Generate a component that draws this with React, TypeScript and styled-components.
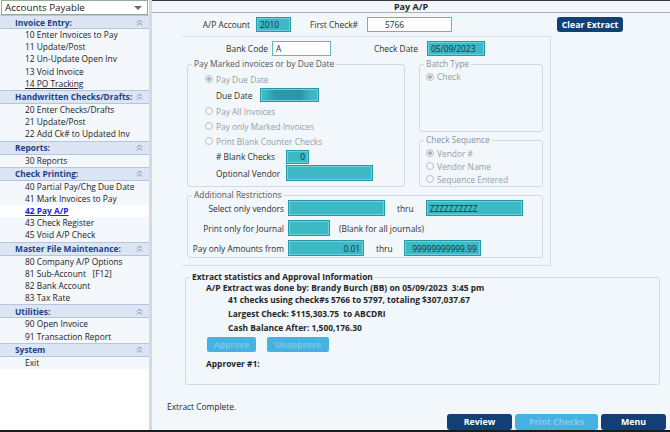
import React from "react";
import styled, { createGlobalStyle } from "styled-components";

const colors = {
  navy: "#123f75",
  teal: "#3db8c5",
  tealEdge: "#2399a8",
  sky: "#45b2e1",
  page: "#f2f7fc",
  line: "#d3d9e0",
  text: "#262626",
  muted: "#979ea7",
  header: "#1d3f8a",
};

const GlobalStyle = createGlobalStyle`
  * { box-sizing: border-box; }
  body {
    margin: 0;
    font-family: "Open Sans", "Noto Sans", sans-serif;
    font-size: 8.4px;
    color: ${colors.text};
  }
`;

const Window = styled.div`
  display: flex;
  width: 670px;
  height: 432px;
  border-bottom: 2px solid #1c1c1c;
  overflow: hidden;
`;

/* ---------- sidebar ---------- */

const Sidebar = styled.div`
  flex: none;
  width: 152px;
  background: #fff;
  border-right: 3px solid #d6dade;
  display: flex;
  flex-direction: column;
`;

const ModuleSelect = styled.div`
  height: 15px;
  margin: 0 1px;
  padding: 0 5px 0 3px;
  border: 1px solid #93aa9c;
  display: flex;
  align-items: center;
  justify-content: space-between;
  font-size: 9.8px;
  color: #222;
`;

const Caret = styled.span`
  width: 0;
  height: 0;
  border-left: 4px solid transparent;
  border-right: 4px solid transparent;
  border-top: 4px solid #6b6b6b;
`;

const Section = styled.div`
  background: #f4f7fb;
`;

const SectionHeader = styled.div`
  height: 14px;
  padding: 0 6px 0 15px;
  display: flex;
  align-items: center;
  justify-content: space-between;
  background: #dbe5f3;
  border-top: 1px solid #b4c5dc;
  border-bottom: 1px solid #b4c5dc;
  font-weight: 700;
  color: ${colors.header};
`;

const MenuItem = styled.div<{ $active?: boolean; $hover?: boolean }>`
  height: 12.2px;
  line-height: 12.2px;
  padding-left: 25px;
  white-space: pre;
  background: ${(p) => (p.$active ? "#fff" : "transparent")};
  color: ${(p) => (p.$active ? "#2424d4" : "#222")};
  font-weight: ${(p) => (p.$active ? 700 : 400)};
  text-decoration: ${(p) => (p.$active || p.$hover ? "underline" : "none")};
`;

const Chevrons = () => (
  <svg width="7" height="7" viewBox="0 0 7 7" fill="none" stroke="#7b8ca3" strokeWidth="1">
    <polyline points="1,3.5 3.5,1 6,3.5" />
    <polyline points="1,6.5 3.5,4 6,6.5" />
  </svg>
);

const menu = [
  {
    title: "Invoice Entry:",
    items: ["10 Enter Invoices to Pay", "11 Update/Post", "12 Un-Update Open Inv", "13 Void Invoice", "14 PO Tracking"],
  },
  { title: "Handwritten Checks/Drafts:", items: ["20 Enter Checks/Drafts", "21 Update/Post", "22 Add Ck# to Updated Inv"] },
  { title: "Reports:", items: ["30 Reports"] },
  {
    title: "Check Printing:",
    items: ["40 Partial Pay/Chg Due Date", "41 Mark Invoices to Pay", "42 Pay A/P", "43 Check Register", "45 Void A/P Check"],
  },
  {
    title: "Master File Maintenance:",
    items: ["80 Company A/P Options", "81 Sub-Account   [F12]", "82 Bank Account", "83 Tax Rate"],
  },
  { title: "Utilities:", items: ["90 Open Invoice", "91 Transaction Report"] },
  { title: "System", items: ["Exit"] },
];

/* ---------- main ---------- */

const Main = styled.div`
  flex: 1;
  background: ${colors.page};
  border-top: 1px solid #3a3a3a;
  display: flex;
  flex-direction: column;
`;

const TitleBar = styled.div`
  height: 12px;
  line-height: 11px;
  border-bottom: 1px solid #a9b0b8;
  text-align: center;
  font-weight: 700;
  font-size: 9px;
`;

const Row = styled.div<{ $h?: number; $mt?: number; $pl?: number }>`
  display: flex;
  align-items: center;
  flex: none;
  height: ${(p) => p.$h ?? 15}px;
  margin-top: ${(p) => p.$mt ?? 0}px;
  padding-left: ${(p) => p.$pl ?? 0}px;
`;

const Label = styled.span<{ $w?: number; $ml?: number; $right?: boolean; $muted?: boolean }>`
  flex: none;
  width: ${(p) => (p.$w ? `${p.$w}px` : "auto")};
  margin-left: ${(p) => p.$ml ?? 0}px;
  text-align: ${(p) => (p.$right ? "right" : "left")};
  color: ${(p) => (p.$muted ? colors.muted : "#2e2e2e")};
  white-space: nowrap;
`;

const Box = styled.input<{ $w: number; $h?: number; $ml?: number; $white?: boolean; $right?: boolean; $pad?: number; $blur?: boolean }>`
  flex: none;
  width: ${(p) => p.$w}px;
  height: ${(p) => p.$h ?? 15}px;
  margin: 0 0 0 ${(p) => p.$ml ?? 0}px;
  padding: 0 3px 0 ${(p) => p.$pad ?? 3}px;
  font: inherit;
  color: #14323a;
  text-align: ${(p) => (p.$right ? "right" : "left")};
  border: 1px solid ${(p) => (p.$white ? "#57bcc6" : colors.tealEdge)};
  box-shadow: inset 0 0 0 1px ${(p) => (p.$white ? "#fff" : "#6fd0d9")};
  background: ${(p) =>
    p.$white
      ? "#fff"
      : p.$blur
      ? `linear-gradient(90deg, ${colors.teal} 0 8%, #2f9aa7 25%, #2c97a3 70%, #3aaeba 82%, ${colors.teal} 90%)`
      : colors.teal};
  outline: none;
`;

const NavyButton = styled.button<{ $w: number; $ml?: number; $h?: number; $off?: boolean }>`
  flex: none;
  width: ${(p) => p.$w}px;
  height: ${(p) => p.$h ?? 15}px;
  margin-left: ${(p) => p.$ml ?? 0}px;
  padding: 0;
  border: none;
  border-radius: 3px;
  background: ${(p) => (p.$off ? colors.sky : colors.navy)};
  color: ${(p) => (p.$off ? "#86cbeb" : "#fff")};
  font: inherit;
  font-weight: 700;
  font-size: 8.8px;
`;

const Panel = styled.div`
  margin: 4px 0 0 30px;
  width: 369px;
  height: 230px;
  border: 1px solid #d9dee4;
  border-left: none;
  display: flex;
  flex-direction: column;
`;

const Group = styled.fieldset<{ $w: number; $h: number; $ml?: number; $mt?: number }>`
  flex: none;
  width: ${(p) => p.$w}px;
  height: ${(p) => p.$h}px;
  margin: ${(p) => p.$mt ?? 0}px 0 0 ${(p) => p.$ml ?? 0}px;
  padding: 0;
  min-width: 0;
  border: 1px solid ${colors.line};
  border-radius: 3px;
`;

const Legend = styled.legend<{ $tone?: "dark" | "gray" | "light" }>`
  margin-left: 4px;
  padding: 0 2px;
  line-height: 10px;
  font-weight: ${(p) => (p.$tone === "dark" ? 700 : 400)};
  color: ${(p) => (p.$tone === "dark" ? "#262626" : p.$tone === "light" ? "#8a9199" : "#555")};
`;

const Stack = styled.div<{ $pt?: number; $center?: boolean }>`
  display: flex;
  flex-direction: column;
  justify-content: ${(p) => (p.$center ? "center" : "flex-start")};
  height: ${(p) => (p.$center ? "100%" : "auto")};
  padding-top: ${(p) => p.$pt ?? 0}px;
`;

const GroupsRow = styled.div`
  display: flex;
  margin-top: 3px;
  padding-left: 5px;
`;

const RightColumn = styled.div`
  display: flex;
  flex-direction: column;
  margin-left: 14px;
`;

const RadioRow = styled.div<{ $h?: number; $pl: number }>`
  display: flex;
  align-items: center;
  gap: 3px;
  height: ${(p) => p.$h ?? 15}px;
  padding-left: ${(p) => p.$pl}px;
  color: ${colors.muted};
`;

const Radio = styled.span<{ $on?: boolean }>`
  flex: none;
  width: 8px;
  height: 8px;
  border-radius: 50%;
  border: 1px solid #b9c0c8;
  background: ${(p) =>
    p.$on ? "radial-gradient(circle, #a9b1ba 0 1.7px, #f4f6f8 2.2px)" : "#f6f8fa"};
`;

const Restrictions = styled.div`
  display: flex;
  flex-direction: column;
  gap: 4px;
`;

const Stat = styled.div<{ $ml: number; $h: number; $mt?: number }>`
  height: ${(p) => p.$h}px;
  line-height: ${(p) => p.$h}px;
  margin: ${(p) => p.$mt ?? 0}px 0 0 ${(p) => p.$ml}px;
  font-weight: 700;
  white-space: pre;
  color: #262626;
`;

const SoftButton = styled.button<{ $w: number; $ml?: number }>`
  width: ${(p) => p.$w}px;
  height: 15px;
  margin-left: ${(p) => p.$ml ?? 0}px;
  padding: 0;
  border: none;
  border-radius: 2px;
  background: ${colors.sky};
  color: #7fc4e6;
  font: inherit;
  font-weight: 700;
`;

const Footer = styled.div`
  margin-top: auto;
  height: 30px;
  display: flex;
  justify-content: space-between;
  padding: 0 4px 0 15px;
`;

const Status = styled.div`
  margin-top: 1px;
  line-height: 12px;
  color: #262626;
`;

const FooterButtons = styled.div`
  align-self: flex-end;
  display: flex;
  gap: 3px;
`;

export default function App() {
  return (
    <>
      <GlobalStyle />
      <Window>
        <Sidebar>
          <ModuleSelect>
            Accounts Payable
            <Caret />
          </ModuleSelect>
          {menu.map((s) => (
            <Section key={s.title}>
              <SectionHeader>
                {s.title}
                <Chevrons />
              </SectionHeader>
              {s.items.map((it) => (
                <MenuItem key={it} $active={it === "42 Pay A/P"} $hover={it === "14 PO Tracking"}>
                  {it}
                </MenuItem>
              ))}
            </Section>
          ))}
        </Sidebar>

        <Main>
          <TitleBar>Pay A/P</TitleBar>

          <Row $mt={4}>
            <Label $w={98} $right>A/P Account</Label>
            <Box $w={35} $ml={6} readOnly value="2010" />
            <Label $w={45} $ml={19}>First Check#</Label>
            <Box $w={85} $ml={12} $white $pad={17} readOnly value="5766" />
            <NavyButton $w={66} $ml={105}>Clear Extract</NavyButton>
          </Row>

          <Panel>
            <Row $mt={4}>
              <Label $w={86} $right>Bank Code</Label>
              <Box $w={59} $ml={4} $white readOnly value="A" />
              <Label $w={87} $right>Check Date</Label>
              <Box $w={58} $ml={9} readOnly value="05/09/2023" />
            </Row>

            <GroupsRow>
              <Group $w={218} $h={128}>
                <Legend>Pay Marked invoices or by Due Date</Legend>
                <Stack $pt={2.5}>
                  <RadioRow $pl={17}>
                    <Radio $on />
                    Pay Due Date
                  </RadioRow>
                  <Row $h={17} $pl={28}>
                    <Label $w={44}>Due Date</Label>
                    <Box $w={59} $h={14} $blur readOnly value="" />
                  </Row>
                  <RadioRow $pl={17}>
                    <Radio />
                    Pay All Invoices
                  </RadioRow>
                  <RadioRow $pl={17}>
                    <Radio />
                    Pay only Marked Invoices
                  </RadioRow>
                  <RadioRow $pl={17}>
                    <Radio />
                    Print Blank Counter Checks
                  </RadioRow>
                  <Row $h={16} $pl={28}>
                    <Label $w={70}># Blank Checks</Label>
                    <Box $w={23} $h={14} $right readOnly value="0" />
                  </Row>
                  <Row $h={17} $pl={28}>
                    <Label $w={70}>Optional Vendor</Label>
                    <Box $w={87} $h={16} readOnly value="" />
                  </Row>
                </Stack>
              </Group>

              <RightColumn>
                <Group $w={124} $h={73}>
                  <Legend $tone="light">Batch Type</Legend>
                  <Stack $center>
                    <RadioRow $pl={6}>
                      <Radio $on />
                      Check
                    </RadioRow>
                  </Stack>
                </Group>
                <Group $w={124} $h={52} $mt={3}>
                  <Legend $tone="light">Check Sequence</Legend>
                  <Stack $pt={1.5}>
                    <RadioRow $h={13} $pl={6}>
                      <Radio $on />
                      Vendor #
                    </RadioRow>
                    <RadioRow $h={13} $pl={6}>
                      <Radio />
                      Vendor Name
                    </RadioRow>
                    <RadioRow $h={13} $pl={6}>
                      <Radio />
                      Sequence Entered
                    </RadioRow>
                  </Stack>
                </Group>
              </RightColumn>
            </GroupsRow>

            <Group $w={356} $h={68} $ml={5} $mt={3}>
              <Legend>Additional Restrictions</Legend>
              <Restrictions>
                <Row $h={16}>
                  <Label $w={96} $right>Select only vendors</Label>
                  <Box $w={97} $h={16} $ml={4} readOnly value="" />
                  <Label $ml={12}>thru</Label>
                  <Box $w={97} $h={16} $ml={12} readOnly value="ZZZZZZZZZZ" />
                </Row>
                <Row $h={16}>
                  <Label $w={96} $right>Print only for Journal</Label>
                  <Box $w={42} $h={16} $ml={4} readOnly value="" />
                  <Label $ml={9}>(Blank for all journals)</Label>
                </Row>
                <Row $h={16}>
                  <Label $w={96} $right>Pay only Amounts from</Label>
                  <Box $w={76} $h={16} $ml={4} $right readOnly value="0.01" />
                  <Label $ml={12}>thru</Label>
                  <Box $w={77} $h={16} $ml={11} $right readOnly value="99999999999.99" />
                </Row>
              </Restrictions>
            </Group>
          </Panel>

          <Group $w={475} $h={113} $ml={33} $mt={6}>
            <Legend $tone="dark">Extract statistics and Approval Information</Legend>
            <Stat $ml={20} $h={11}>A/P Extract was done by: Brandy Burch (BB) on 05/09/2023  3:45 pm</Stat>
            <Stat $ml={42} $h={14}>41 checks using check#s 5766 to 5797, totaling $307,037.67</Stat>
            <Stat $ml={42} $h={14}>Largest Check: $115,303.75  to ABCDRI</Stat>
            <Stat $ml={42} $h={14}>Cash Balance After: 1,500,176.30</Stat>
            <Row $mt={2} $pl={21}>
              <SoftButton $w={49}>Approve</SoftButton>
              <SoftButton $w={62} $ml={11}>Unapprove</SoftButton>
            </Row>
            <Stat $ml={20} $h={12} $mt={6}>Approver #1:</Stat>
          </Group>

          <Footer>
            <Status>Extract Complete.</Status>
            <FooterButtons>
              <NavyButton $w={65} $h={16}>Review</NavyButton>
              <NavyButton $w={83} $h={16} $off>Print Checks</NavyButton>
              <NavyButton $w={65} $h={16}>Menu</NavyButton>
            </FooterButtons>
          </Footer>
        </Main>
      </Window>
    </>
  );
}
